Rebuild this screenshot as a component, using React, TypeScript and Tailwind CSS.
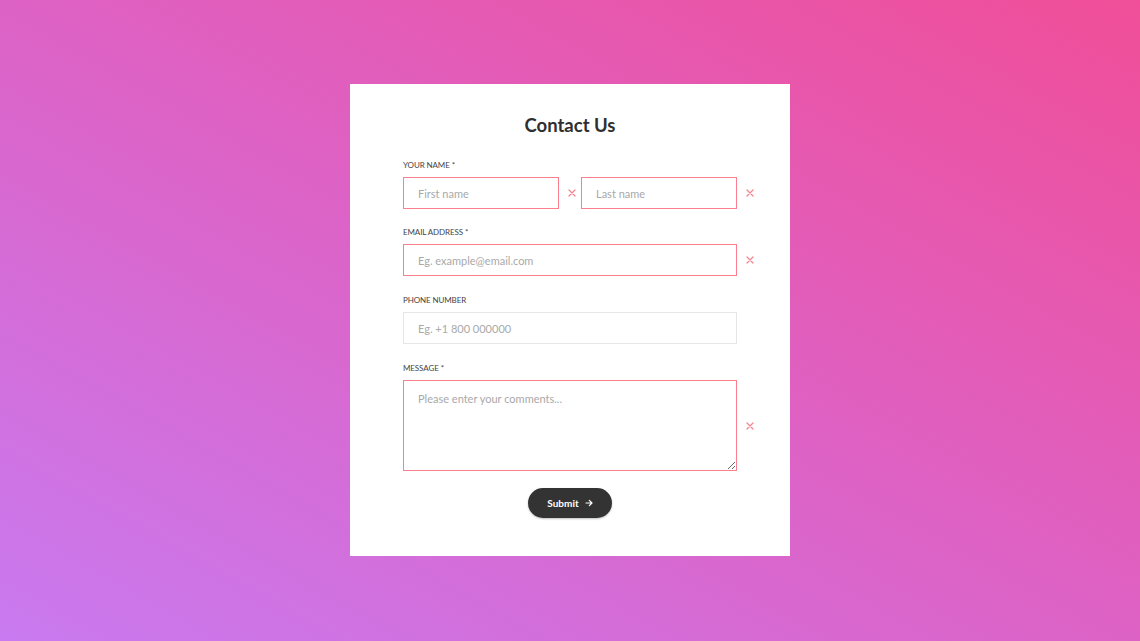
import React from "react";

const XMark = () => (
  <div className="w-[22px] flex items-center justify-center pl-[3px] shrink-0">
    <svg width="8" height="8" viewBox="0 0 8 8" fill="none">
      <path d="M1 1L7 7M7 1L1 7" stroke="#f7838f" strokeWidth="1.3" strokeLinecap="round" />
    </svg>
  </div>
);

const Label = ({ children, req }: { children: React.ReactNode; req?: boolean }) => (
  <div className="text-[8px] leading-[10px] uppercase text-[#444] tracking-[-0.1px] mb-[7px]">
    {children}
    {req && <span className="ml-[2px]">*</span>}
  </div>
);

const inputCls =
  "h-[32px] w-full min-w-0 border bg-white px-[14px] text-[11px] text-[#333] outline-none placeholder:text-[#a9a9a9]";

export default function App() {
  return (
    <div
      className="w-full h-[641px] flex items-start justify-center pt-[84px] bg-[linear-gradient(to_top_right,#c97af0_0%,#dd62c5_50%,#f04e98_100%)]"
      style={{ fontFamily: "Lato, 'Open Sans', sans-serif" }}
    >
      <div className="w-[440px] h-[472px] bg-white pt-[30px]">
        <h1 className="text-center text-[18.5px] leading-[22px] font-bold text-[#2f2f2f] mb-[24px]">
          Contact Us
        </h1>

        <div className="pl-[53px] pr-[31px]">
          <Label req>Your name</Label>
          <div className="flex mb-[18px]">
            <input className={`${inputCls} border-[#fb7f8c]`} placeholder="First name" />
            <XMark />
            <input className={`${inputCls} border-[#fb7f8c]`} placeholder="Last name" />
            <XMark />
          </div>

          <Label req>Email address</Label>
          <div className="flex mb-[19px]">
            <input className={`${inputCls} border-[#fb7f8c]`} placeholder="Eg. example@email.com" />
            <XMark />
          </div>

          <Label>Phone number</Label>
          <div className="flex mb-[19px] pr-[22px]">
            <input className={`${inputCls} border-[#e6e6e6]`} placeholder="Eg. +1 800 000000" />
          </div>

          <Label req>Message</Label>
          <div className="flex">
            <textarea
              className="h-[91px] w-full min-w-0 border border-[#fb7f8c] bg-white px-[14px] py-[10px] text-[11px] text-[#333] outline-none placeholder:text-[#a9a9a9] resize-y"
              placeholder="Please enter your comments..."
            />
            <XMark />
          </div>

          <div className="flex justify-center pr-[22px] mt-[17px]">
            <button className="h-[30px] w-[84px] rounded-full bg-[#333333] text-white text-[10px] font-bold flex items-center justify-center gap-[6px] shadow-[0_1px_2px_rgba(0,0,0,0.25)]">
              Submit
              <svg width="8" height="8" viewBox="0 0 8 8" fill="none">
                <path d="M1 4H7M4.3 1.3L7 4L4.3 6.7" stroke="white" strokeWidth="1.2" strokeLinecap="round" strokeLinejoin="round" />
              </svg>
            </button>
          </div>
        </div>
      </div>
    </div>
  );
}
